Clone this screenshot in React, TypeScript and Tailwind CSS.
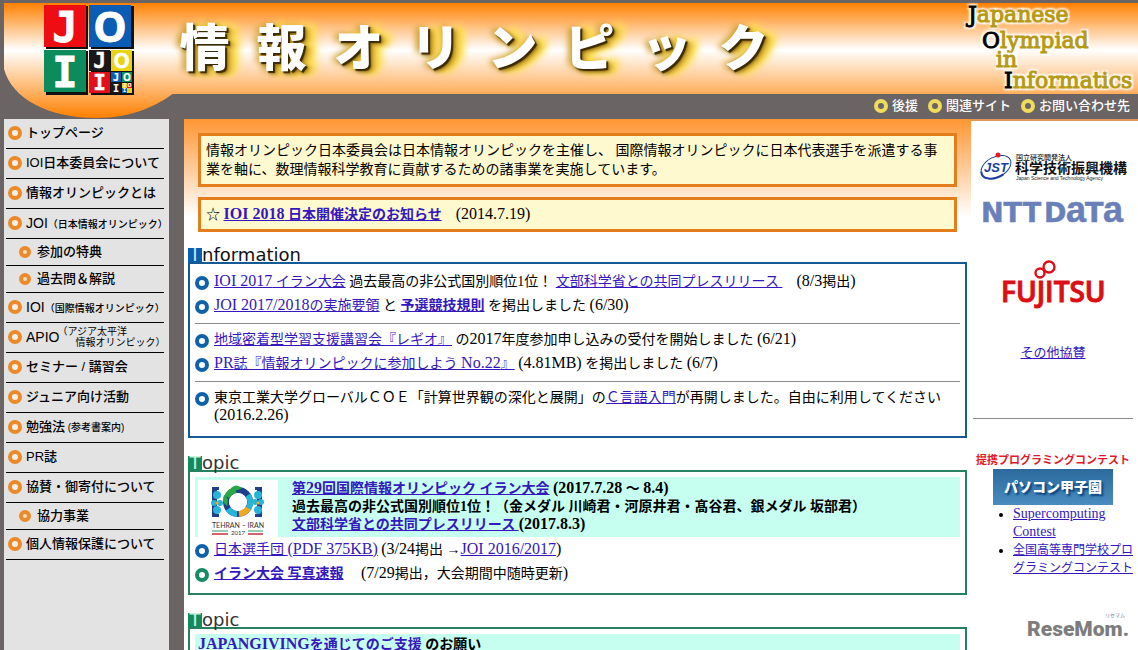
import type { ReactNode } from "react";

const serif = "font-['Liberation_Serif','Noto_Sans_CJK_JP',serif]";
const sans = "font-['Liberation_Sans','Noto_Sans_CJK_JP',sans-serif]";

const ringStyles = {
  orange: "size-3.5 border-[#ec8a29] bg-[#f6efe6]",
  small: "size-3 border-[#ec8a29] bg-[#f9dfc0]",
  yellow: "size-3.5 border-[#f0dc5c] bg-[#6a6464]",
  blue: "size-3.5 border-[#0f62a8] bg-white",
  green: "size-3.5 border-[#178a66] bg-white",
};

function Ring({ kind }: { kind: keyof typeof ringStyles }) {
  return <span className={`shrink-0 rounded-full border-4 ${ringStyles[kind]}`} />;
}

// latin runs are set larger than the kana around them
function L({ children }: { children: ReactNode }) {
  return <span className="text-base leading-none">{children}</span>;
}

function A({ children, bold }: { children: ReactNode; bold?: boolean }) {
  return (
    <a href="#" className={`underline text-[#3418bd] ${bold ? "font-bold" : ""}`}>
      {children}
    </a>
  );
}

type SquareProps = { x: number; y: number; s: number; fill: string; letter: string };

function Square({ x, y, s, fill, letter }: SquareProps) {
  return (
    <g>
      <rect x={x} y={y} width={s} height={s} fill={fill} />
      <text
        x={x + s / 2}
        y={y + s * 0.87}
        fontSize={s}
        fontWeight="bold"
        textAnchor="middle"
        fill="#fff"
        stroke="#fff"
        strokeWidth={s * 0.02}
        fontFamily={letter === "O" ? "Open Sans" : "DejaVu Sans Mono"}
      >
        {letter}
      </text>
    </g>
  );
}

function JoiLogo() {
  return (
    <svg viewBox="0 0 90 91" className="w-[90px] h-[91px] shrink-0 overflow-visible" role="img" aria-label="JOI">
      <path d="M2 2H44V45H2zM47 2H90V45H47zM2 47H44V91H2zM47 47H90V91H47z" fill="#111" />
      <Square x={0} y={1} s={42} fill="#ee0d12" letter="J" />
      <Square x={45} y={1} s={42} fill="#0a5cb5" letter="O" />
      <Square x={0} y={46} s={42} fill="#0c8c5c" letter="I" />
      <Square x={45} y={46} s={21} fill="#1c1718" letter="J" />
      <Square x={67} y={46} s={21} fill="#ead313" letter="O" />
      <Square x={45} y={68} s={21} fill="#e3101b" letter="I" />
      <Square x={67} y={68} s={10} fill="#0a5cb5" letter="J" />
      <Square x={78} y={68} s={10} fill="#0c8c5c" letter="O" />
      <Square x={67} y={79} s={10} fill="#1c1718" letter="I" />
      <Square x={78} y={79} s={5} fill="#ead313" letter="J" />
      <Square x={83} y={79} s={5} fill="#e3101b" letter="O" />
      <Square x={78} y={84} s={5} fill="#0a5cb5" letter="I" />
      <rect x={83} y={84} width={5} height={5} fill="#ead313" />
    </svg>
  );
}

function Header() {
  return (
    <header className="relative pt-[3px]">
      <svg viewBox="0 0 170 116" className="absolute left-0 top-[3px] w-[170px] h-[116px]" aria-hidden="true">
        <defs>
          <linearGradient id="glow" x1="0" y1="0" x2="0" y2="1">
            <stop offset="0" stopColor="#ff8000" />
            <stop offset="0.41" stopColor="#fff" />
            <stop offset="1" stopColor="#ff8000" />
          </linearGradient>
        </defs>
        <path d="M0 0H170V90C155 101 130 115 92 115C45 115 8 96 0 66Z" fill="url(#glow)" />
      </svg>
      <div className="ml-[165px] h-[91px] bg-[linear-gradient(#ff8000_0,#ffffff_47px,#ff8000_115px)]" />
      <div className="absolute inset-x-0 top-1 flex items-start">
        <div className="pl-10">
          <JoiLogo />
        </div>
        <h1
          className={`ml-8 grid grid-cols-[repeat(8,77px)] text-center text-[50px] leading-[90px] font-black text-white ${sans} [text-shadow:2px_2px_1px_#3b2a05,3px_3px_4px_#8a6508,8px_4px_5px_#e8c040,10px_4px_8px_#ffe04a,12px_0_8px_#ffe04a,-4px_0_6px_#d0a030]`}
        >
          {"情報オリンピック".split("").map((c, i) => (
            <span key={i}>{c}</span>
          ))}
        </h1>
        <div className="ml-auto mr-1 w-[166px] font-['DejaVu_Serif',serif] text-[22px] leading-[21px] text-[#b59a14] [-webkit-text-stroke:1px] [text-shadow:0_0_2px_#fff,0_0_2px_#fff,2px_2px_2px_#fff,-2px_-2px_2px_#fff,2px_-2px_2px_#fff,-2px_2px_2px_#fff]">
          <div>
            <b className="font-normal text-black">J</b>apanese
          </div>
          <div className="pl-3.5 pt-[5px]">
            <b className="font-normal text-black">O</b>lympiad
          </div>
          <div className="pl-7 -mt-0.5">in</div>
          <div className="pl-9">
            <b className="font-normal text-black">I</b>nformatics
          </div>
        </div>
      </div>
      <nav className={`flex h-[25px] items-center justify-end gap-2.5 pr-2 pb-0.5 text-[13px] font-medium text-white ${sans}`}>
        {["後援", "関連サイト", "お問い合わせ先"].map((t) => (
          <a key={t} href="#" className="flex items-center gap-1">
            <Ring kind="yellow" />
            {t}
          </a>
        ))}
      </nav>
    </header>
  );
}

type MenuItem = { label: string; note?: string; sub?: boolean; lines?: string[]; latin?: boolean };

const menu: MenuItem[] = [
  { label: "トップページ" },
  { label: "IOI日本委員会について" },
  { label: "情報オリンピックとは" },
  { label: "JOI", note: "（日本情報オリンピック）", latin: true },
  { label: "参加の特典", sub: true },
  { label: "過去問＆解説", sub: true },
  { label: "IOI", note: "（国際情報オリンピック）", latin: true },
  { label: "APIO", lines: ["（アジア太平洋", "情報オリンピック）"], latin: true },
  { label: "セミナー / 講習会" },
  { label: "ジュニア向け活動" },
  { label: "勉強法", note: " (参考書案内)" },
  { label: "PR誌" },
  { label: "協賛・御寄付について" },
  { label: "協力事業", sub: true },
  { label: "個人情報保護について" },
];

function Sidebar() {
  return (
    <aside className={`w-[165px] shrink-0 bg-[#e3e3e3] pl-0.5 pr-[5px] text-black ${sans}`}>
      <ul>
        {menu.map((m) => (
          <li key={m.label} className={`border-b border-black ${m.sub ? "h-[27px] pl-[13px]" : "h-[30px] pl-0.5"}`}>
            <a href="#" className={`flex h-full items-center whitespace-nowrap ${m.sub ? "gap-1.5" : "gap-1 pb-0.5"}`}>
              <Ring kind={m.sub ? "small" : "orange"} />
              <span className={`font-medium ${m.latin ? "text-sm" : "text-[13px]"}`}>
                {m.label}
                {m.note && <span className="text-[10px] whitespace-pre">{m.note}</span>}
              </span>
              {m.lines && (
                <span className="-ml-1.5 text-[10px] leading-[11px]">
                  {m.lines[0]}
                  <span className="block pl-[18px]">{m.lines[1]}</span>
                </span>
              )}
            </a>
          </li>
        ))}
      </ul>
    </aside>
  );
}

type SectionProps = { title: string; tone: "blue" | "green"; className: string; children: ReactNode };

function Section({ title, tone, className, children }: SectionProps) {
  const blue = tone === "blue";
  return (
    <section className={`mx-1 ${className}`}>
      <h2 className="flex font-['DejaVu_Sans',sans-serif] text-lg leading-[14px]">
        <span className={`w-3.5 text-center ${blue ? "bg-[#0a5fae] text-[#cfe6f8]" : "bg-[#128a5e] text-[#c8f2e0]"}`}>
          {title[0]}
        </span>
        <span className={blue ? "text-[#111]" : "text-[#333]"}>{title.slice(1)}</span>
      </h2>
      <div className={`border-2 pl-[5px] pr-[5px] ${blue ? "border-[#155a94]" : "border-[#27805f]"}`}>{children}</div>
    </section>
  );
}

function Row({ kind, children }: { kind: "blue" | "green"; children: ReactNode }) {
  return (
    <li className="flex gap-[5px] py-[3px]">
      <span className="flex h-5 -mb-0.5 items-center">
        <Ring kind={kind} />
      </span>
      <p>{children}</p>
    </li>
  );
}

function IranLogo() {
  return (
    <svg viewBox="0 0 80 57" className="w-20 h-[57px] bg-white" role="img" aria-label="IOI 2017">
      <path d="M14 7h7v3h-2v24h2v3h-7zM57 7h7v30h-7v-3h2v-24h-2z" fill="#1d3f8c" />
      <g fill="none" strokeWidth="6">
        <circle cx="40" cy="22" r="12" stroke="#1d3f8c" />
        <path d="M29 17A12 12 0 0 1 38 10" stroke="#28a745" />
        <path d="M50 15A12 12 0 0 1 50 29" stroke="#28b4d8" />
        <path d="M50 28A12 12 0 0 1 41 34" stroke="#f2a81d" />
        <path d="M39 34A12 12 0 0 1 30 29" stroke="#28b4d8" />
      </g>
      <path d="M33 8q5-5 11 0q-5 4-11 0zM26 15q6 3 3 11q-6-4-3-11z" fill="#28a745" />
      <circle cx="40" cy="22" r="9" fill="#fff" />
      <g fill="#28b4d8">
        <circle cx="19" cy="15" r="4" />
        <circle cx="16" cy="23" r="3" />
        <circle cx="22" cy="23" r="3" />
        <circle cx="19" cy="30" r="4" />
        <circle cx="60" cy="15" r="4" />
        <circle cx="57" cy="22" r="3" />
        <circle cx="63" cy="22" r="3" />
        <circle cx="60" cy="30" r="4" />
      </g>
      <g fill="#f2a81d">
        <circle cx="19" cy="23" r="1.5" />
        <circle cx="60" cy="23" r="1.5" />
      </g>
      <text x="40" y="48" fontSize="7" textAnchor="middle" fill="#333" fontFamily="Lato">
        TEHRAN – IRAN
      </text>
      <path d="M14 51h16M50 51h15" stroke="#2e9c68" />
      <path d="M14 54h16M50 54h15" stroke="#c8323c" strokeWidth="1.5" />
      <text x="40" y="55" fontSize="6" textAnchor="middle" fill="#333" fontFamily="Lato">
        2017
      </text>
    </svg>
  );
}

function Main() {
  return (
    <main
      className={`min-w-0 flex-1 bg-white bg-[linear-gradient(#ff9633_0,#ffffff_98px)] pt-3.5 text-sm leading-[18px] text-black ${serif}`}
    >
      <p className="mx-3.5 border-3 border-[#e47d1c] bg-[#fff9cf] p-[5px] leading-[19px]">
        情報オリンピック日本委員会は日本情報オリンピックを主催し、 国際情報オリンピックに日本代表選手を派遣する事業を軸に、数理情報科学教育に貢献するための諸事業を実施しています。
      </p>
      <p className="mx-3.5 mt-2.5 border-3 border-[#e47d1c] bg-[#fff9cf] p-[5px] leading-[19px]">
        ☆{" "}
        <A bold>
          <L>IOI 2018</L> 日本開催決定のお知らせ
        </A>
        {"　"}
        <L>(2014.7.19)</L>
      </p>

      <Section title="Information" tone="blue" className="mt-4">
        <ul className="pt-1.5">
          <Row kind="blue">
            <A>
              <L>IOI 2017</L> イラン大会
            </A>{" "}
            過去最高の非公式国別順位1位！ <A>文部科学省との共同プレスリリース </A>
            {"　"}
            <L>(8/3</L>掲出<L>)</L>
          </Row>
          <Row kind="blue">
            <A>
              <L>JOI 2017/2018</L>の実施要領
            </A>{" "}
            と <A bold>予選競技規則</A> を掲出しました <L>(6/30)</L>
          </Row>
        </ul>
        <hr className="mt-[5px] mb-1 border-[#8c8c8c]" />
        <ul>
          <Row kind="blue">
            <A>地域密着型学習支援講習会『レギオ』</A> の<L>2017</L>年度参加申し込みの受付を開始しました <L>(6/21)</L>
          </Row>
          <Row kind="blue">
            <A>
              <L>PR</L>誌『情報オリンピックに参加しよう <L>No.22</L>』
            </A>{" "}
            <L>(4.81MB)</L> を掲出しました <L>(6/7)</L>
          </Row>
        </ul>
        <hr className="mt-[5px] mb-1 border-[#8c8c8c]" />
        <ul className="pb-2">
          <Row kind="blue">
            東京工業大学グローバルＣＯＥ「計算世界観の深化と展開」の<A>Ｃ言語入門</A>
            が再開しました。自由に利用してください <L>(2016.2.26)</L>
          </Row>
        </ul>
      </Section>

      <Section title="Topic" tone="green" className="mt-[18px]">
        <div className="mt-[5px] flex bg-[#c6fff0] pl-[3px] pt-[3px]">
          <IranLogo />
          <p className="ml-3.5 font-bold">
            <A>
              第<L>29</L>回国際情報オリンピック イラン大会
            </A>{" "}
            <L>(2017.7.28</L> 〜 <L>8.4)</L>
            <br />
            過去最高の非公式国別順位1位！（金メダル 川崎君・河原井君・髙谷君、銀メダル 坂部君）
            <br />
            <A>文部科学省との共同プレスリリース </A> <L>(2017.8.3)</L>
          </p>
        </div>
        <ul className="pt-px pb-[7px]">
          <Row kind="blue">
            <A>
              日本選手団 <L>(PDF 375KB)</L>
            </A>{" "}
            <L>(3/24</L>掲出 →
            <A>
              <L>JOI 2016/2017</L>
            </A>
            <L>)</L>
          </Row>
          <Row kind="green">
            <A bold>イラン大会 写真速報</A>
            {" 　"}
            <L>(7/29</L>掲出，大会期間中随時更新<L>)</L>
          </Row>
        </ul>
      </Section>

      <Section title="Topic" tone="green" className="mt-[18px]">
        <p className="mt-[5px] bg-[#c6fff0] px-[3px] pt-0.5 pb-6 font-bold">
          <A>
            <L>JAPANGIVING</L>を通じてのご支援
          </A>{" "}
          のお願い
        </p>
      </Section>
    </main>
  );
}

function JstLogo() {
  return (
    <svg viewBox="0 0 148 34" className="w-[148px] h-[34px]" role="img" aria-label="科学技術振興機構">
      <g transform="rotate(-28 17 16)" fill="none" stroke="#1c3f9e">
        <ellipse cx="17" cy="16" rx="16" ry="10" />
        <path d="M2 13A16 10 0 0 0 20 26" strokeWidth="2" />
      </g>
      <circle cx="19" cy="4" r="2.5" fill="#e01b24" />
      <text x="5" y="21" fontSize="13" fontWeight="bold" fontStyle="italic" fill="#1c3f9e" fontFamily="Liberation Sans">
        JST
      </text>
      <text x="37" y="9" fontSize="7" fontWeight="500" fill="#222" fontFamily="Noto Sans CJK JP">
        国立研究開発法人
      </text>
      <text x="36" y="22" fontSize="14" fontWeight="bold" fill="#111" fontFamily="Noto Sans CJK JP">
        科学技術振興機構
      </text>
      <text x="37" y="29" fontSize="5" fill="#222" fontFamily="Liberation Sans">
        Japan Science and Technology Agency
      </text>
    </svg>
  );
}

function NttLogo() {
  return (
    <svg viewBox="0 0 142 22" className="w-[142px] h-[22px] overflow-visible" role="img" aria-label="NTT DATA">
      <g fill="#6a80ba" stroke="#6a80ba" strokeWidth="0.5" fontWeight="bold" fontFamily="DejaVu Sans">
        <text x="-1" y="21" fontSize="27">
          NTT
        </text>
        <text x="62" y="21" fontSize="27">
          D
        </text>
        <text x="84" y="21" fontSize="36" fontFamily="Liberation Sans">
          a
        </text>
        <text x="103" y="21" fontSize="27">
          T
        </text>
        <text x="121" y="21" fontSize="36" fontFamily="Liberation Sans">
          a
        </text>
      </g>
    </svg>
  );
}

function FujitsuLogo() {
  return (
    <svg viewBox="0 0 104 54" className="w-[104px] h-[54px] overflow-visible" role="img" aria-label="FUJITSU">
      <text
        x="0"
        y="43"
        fontSize="28"
        fontWeight="600"
        fill="#dc0f16"
        stroke="#dc0f16"
        strokeWidth="1"
        fontFamily="Open Sans"
      >
        FUJITSU
      </text>
      <g fill="none" stroke="#dc0f16" strokeWidth="2.4">
        <circle cx="39" cy="14" r="4.5" />
        <circle cx="48" cy="8" r="5.5" />
      </g>
    </svg>
  );
}

function Sponsors() {
  return (
    <aside className={`w-[167px] shrink-0 border-t-2 border-[#e2975c] bg-white pr-[5px] pl-0.5 text-black ${serif}`}>
      <div className="flex flex-col items-center pt-[30px]">
        <a href="#">
          <JstLogo />
        </a>
        <a href="#" className="mt-4">
          <NttLogo />
        </a>
        <a href="#" className="mt-9">
          <FujitsuLogo />
        </a>
        <a href="#" className="mt-[31px] text-[13px] leading-[18px] text-[#3418bd] underline">
          その他協賛
        </a>
      </div>
      <hr className="mt-14 border-[#8c8c8c]" />
      <h3 className="mt-8 text-center text-[11px] leading-[18px] font-bold text-[#e0182d]">
        提携プログラミングコンテスト
      </h3>
      <a
        href="#"
        className={`mx-auto block h-9 w-[120px] bg-linear-to-b from-[#2c6a9c] to-[#4a8cc0] text-center text-sm leading-9 font-black text-white [text-shadow:2px_2px_2px_#0c4076,0_0_3px_#1d79b8] ${sans}`}
      >
        パソコン甲子園
      </a>
      <ul className="list-disc pl-10 text-xs leading-[18px] marker:text-black">
        <li>
          <a href="#" className="text-sm leading-[18px] text-[#3418bd] underline">
            Supercomputing Contest
          </a>
        </li>
        <li>
          <a href="#" className="text-[#3418bd] underline">
            全国高等専門学校プログラミングコンテスト
          </a>
        </li>
      </ul>
    </aside>
  );
}

export default function App() {
  return (
    <div className="relative flex h-screen flex-col overflow-hidden bg-[#6a6464] pl-1">
      <Header />
      <div className="flex min-h-0 flex-1">
        <Sidebar />
        <div className="w-[15px] shrink-0" />
        <Main />
        <Sponsors />
      </div>
      <svg viewBox="0 0 104 28" className="absolute right-2 bottom-2.5 w-[104px] h-7 overflow-visible" role="img" aria-label="ReseMom">
        <text x="1" y="24" fontSize="21" fontWeight="900" fill="#7d7d7d" fontFamily="Roboto">
          ReseMom.
        </text>
        <text x="79" y="5" fontSize="5" fill="#7d7d7d" fontFamily="Noto Sans CJK JP">
          リセマム
        </text>
      </svg>
    </div>
  );
}
